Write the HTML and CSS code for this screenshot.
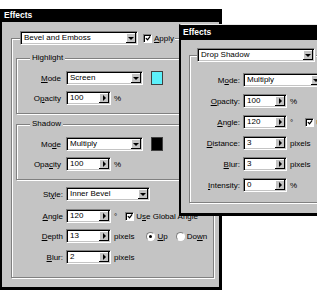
FILE: index.html
```html
<!DOCTYPE html>
<html>
<head>
<meta charset="utf-8">
<link rel="stylesheet" href="styles.css">
</head>
<body>
<div class="desk">
  <div class="dlg main">
    <div class="title">Effects</div>
    <div class="body">
      <fieldset class="grp outer">
        <legend class="lg-ctl">
          <span class="select w118"><span class="val">Bevel and Emboss</span><span class="drop"></span></span>
          <span class="chk"><svg viewBox="0 0 7 7" width="7" height="7"><path d="M1 3 L3 5 L6 1" stroke="#000" stroke-width="1.4" fill="none"/></svg></span>
          <span class="cl"><u>A</u>pply</span>
        </legend>
        <fieldset class="grp inner">
          <legend class="lg-txt">Highlight</legend>
          <div class="row">
            <span class="lab li"><u>M</u>ode</span>
            <span class="select w77"><span class="val">Screen</span><span class="drop"></span></span>
            <span class="swatch cyan"></span>
          </div>
          <div class="row">
            <span class="lab li">O<u>p</u>acity</span>
            <span class="spin w45"><span class="val">100</span><span class="arr"></span></span>
            <span class="unit">%</span>
          </div>
        </fieldset>
        <fieldset class="grp inner sh">
          <legend class="lg-txt">Shadow</legend>
          <div class="row">
            <span class="lab li">Mo<u>d</u>e</span>
            <span class="select w77"><span class="val">Multiply</span><span class="drop"></span></span>
            <span class="swatch black"></span>
          </div>
          <div class="row">
            <span class="lab li">Opa<u>c</u>ity</span>
            <span class="spin w45"><span class="val">100</span><span class="arr"></span></span>
            <span class="unit">%</span>
          </div>
        </fieldset>
        <div class="rows">
          <div class="row">
            <span class="lab lo">St<u>y</u>le:</span>
            <span class="select w84"><span class="val">Inner Bevel</span><span class="drop"></span></span>
          </div>
          <div class="row">
            <span class="lab lo"><u>A</u>ngle</span>
            <span class="spin w45"><span class="val">120</span><span class="arr"></span></span>
            <span class="unit">°</span>
            <span class="chk ml"><svg viewBox="0 0 7 7" width="7" height="7"><path d="M1 3 L3 5 L6 1" stroke="#000" stroke-width="1.4" fill="none"/></svg></span>
            <span class="cl">U<u>s</u>e Global Angle</span>
          </div>
          <div class="row">
            <span class="lab lo"><u>D</u>epth</span>
            <span class="spin w45"><span class="val">13</span><span class="arr"></span></span>
            <span class="unit">pixels</span>
            <span class="rad on ml2"></span>
            <span class="cl"><u>U</u>p</span>
            <span class="rad ml3"></span>
            <span class="cl">Do<u>w</u>n</span>
          </div>
          <div class="row">
            <span class="lab lo"><u>B</u>lur:</span>
            <span class="spin w45"><span class="val">2</span><span class="arr"></span></span>
            <span class="unit">pixels</span>
          </div>
        </div>
      </fieldset>
    </div>
  </div>

  <div class="dlg drop-dlg">
    <div class="title t2">Effects</div>
    <div class="body2">
      <fieldset class="grp g2">
        <legend class="lg-ctl l2">
          <span class="select w118"><span class="val">Drop Shadow</span><span class="drop"></span></span>
        </legend>
        <div class="row">
          <span class="lab l2w">M<u>o</u>de:</span>
          <span class="select w80"><span class="val">Multiply</span><span class="drop"></span></span>
        </div>
        <div class="row">
          <span class="lab l2w"><u>O</u>pacity:</span>
          <span class="spin w44"><span class="val">100</span><span class="arr"></span></span>
          <span class="unit">%</span>
        </div>
        <div class="row">
          <span class="lab l2w"><u>A</u>ngle:</span>
          <span class="spin w44"><span class="val">120</span><span class="arr"></span></span>
          <span class="unit">°</span>
          <span class="chk ml4"><svg viewBox="0 0 7 7" width="7" height="7"><path d="M1 3 L3 5 L6 1" stroke="#000" stroke-width="1.4" fill="none"/></svg></span>
          <span class="cl">Use</span>
        </div>
        <div class="row">
          <span class="lab l2w"><u>D</u>istance:</span>
          <span class="spin w44"><span class="val">3</span><span class="arr"></span></span>
          <span class="unit">pixels</span>
        </div>
        <div class="row">
          <span class="lab l2w"><u>B</u>lur:</span>
          <span class="spin w44"><span class="val">3</span><span class="arr"></span></span>
          <span class="unit">pixels</span>
        </div>
        <div class="row">
          <span class="lab l2w"><u>I</u>ntensity:</span>
          <span class="spin w44"><span class="val">0</span><span class="arr"></span></span>
          <span class="unit">%</span>
        </div>
      </fieldset>
    </div>
  </div>
</div>
</body>
</html>
```

FILE: styles.css
```css
* { box-sizing: border-box; }
html, body {
  margin: 0;
  padding: 0;
  background: #fff;
  width: 317px;
  height: 296px;
  overflow: hidden;
}
body {
  font-family: "Liberation Sans", Arial, sans-serif;
  font-size: 8px;
  color: #000;
}
u { text-decoration-thickness: 1px; text-underline-offset: 1px; }

.desk {
  position: relative;
  width: 317px;
  height: 296px;
  overflow: hidden;
}

.dlg {
  background: #c4c4c4;
  display: flex;
  flex-direction: column;
}

.main {
  margin-top: 9px;
  width: 222px;
  height: 281px;
  border-left: 2px solid #000;
  border-right: 3px solid #000;
  border-bottom: 3px solid #000;
}

.title {
  flex: none;
  background: #000;
  color: #fff;
  font-weight: bold;
  font-size: 8.5px;
  height: 13px;
  line-height: 13px;
  padding-left: 2px;
}

.body {
  flex: 1;
  padding: 9px 0 0 9px;
}

/* group boxes */
fieldset.grp {
  margin: 0;
  padding: 0;
  min-width: 0;
  border: 1px solid #808080;
  box-shadow: 1px 1px 0 #fff, inset 1px 1px 0 #fff;
}
legend {
  background: #c4c4c4;
}
.lg-ctl {
  display: flex;
  align-items: center;
  margin-left: 8px;
  padding: 0 1px 0 0;
  height: 14px;
}
.lg-txt {
  margin-left: 13px;
  padding: 0 2px;
  line-height: 10px;
  height: 10px;
}

fieldset.outer {
  width: 203px;
  height: 247px;
}
fieldset.inner {
  margin: 8px 0 0 4px;
  width: 192px;
  padding: 8px 0 8px 0;
}
fieldset.inner.sh {
  margin-top: 5px;
  padding-top: 8px;
}
.rows {
  padding-top: 7px;
}
.rows .row:nth-child(2) { margin-top: 8px; }
.rows .row:nth-child(4) { margin-top: 7px; }

/* rows */
.row {
  display: flex;
  align-items: center;
  height: 14px;
}
.row + .row { margin-top: 6px; }
.lab {
  flex: none;
  text-align: right;
  white-space: nowrap;
}
.li { width: 44px; margin-right: 5px; }
.lo { width: 51px; margin-right: 3px; }

/* controls */
.select, .spin {
  flex: none;
  display: flex;
  align-items: stretch;
  height: 14px;
  background: #fff;
  border: 1px solid;
  border-color: #808080 #fff #fff #808080;
  box-shadow: inset 1px 1px 0 #000, inset -1px -1px 0 #c4c4c4;
  padding: 1px;
}
.val {
  flex: 1;
  padding-left: 2px;
  line-height: 10px;
  white-space: nowrap;
  overflow: hidden;
}
.drop, .arr {
  flex: none;
  width: 10px;
  background: #c4c4c4;
  box-shadow: inset -1px -1px 0 #000, inset 1px 1px 0 #fff;
  display: flex;
  align-items: center;
  justify-content: center;
}
.drop::after {
  content: "";
  border-top: 3px solid #000;
  border-left: 3px solid transparent;
  border-right: 3px solid transparent;
}
.arr::after {
  content: "";
  border-left: 3px solid #000;
  border-top: 3px solid transparent;
  border-bottom: 3px solid transparent;
}
.w118 { width: 118px; }
.w77 { width: 77px; }
.w80 { width: 80px; }
.w84 { width: 84px; }
.w45 { width: 45px; }
.w44 { width: 44px; }

.swatch {
  flex: none;
  width: 12px;
  height: 14px;
  margin-left: 8px;
  border: 1px solid #404040;
}
.cyan { background: #5cf0fa; }
.black { background: #000; }

.unit { margin-left: 3px; white-space: nowrap; }

.chk {
  flex: none;
  width: 9px;
  height: 9px;
  background: #fff;
  border: 1px solid;
  border-color: #808080 #fff #fff #808080;
  box-shadow: inset 1px 1px 0 #000;
  display: flex;
  align-items: center;
  justify-content: center;
  margin-left: 5px;
}
.chk svg { display: block; margin: 1px 0 0 1px; }
.cl { margin-left: 2px; white-space: nowrap; }
.chk.ml { margin-left: 8px; }
.chk.ml4 { margin-left: 12px; }

.rad {
  flex: none;
  width: 9px;
  height: 9px;
  border-radius: 50%;
  background: #fff;
  border: 1px solid;
  border-color: #808080 #fff #fff #808080;
  display: flex;
  align-items: center;
  justify-content: center;
}
.rad.on::after {
  content: "";
  width: 3px;
  height: 3px;
  border-radius: 50%;
  background: #000;
}
.rad.ml2 { margin-left: 12px; }
.rad.ml3 { margin-left: 8px; }

/* second dialog */
.drop-dlg {
  position: absolute;
  left: 179px;
  top: 24px;
  width: 138px;
  height: 192px;
  border-left: 2px solid #000;
  border-bottom: 3px solid #000;
  border-top: 1px solid #e8e8e8;
  overflow: hidden;
}
.t2 {
  height: 15px;
  line-height: 15px;
  padding-left: 2px;
}
.body2 {
  flex: 1;
  padding: 8px 0 0 8px;
}
fieldset.g2 {
  width: 160px;
  height: 155px;
  padding: 11px 0 0 0;
}
.lg-ctl.l2 { margin-left: 7px; }
.l2w { width: 50px; margin-right: 3px; }
.g2 .row + .row { margin-top: 7px; }
```
